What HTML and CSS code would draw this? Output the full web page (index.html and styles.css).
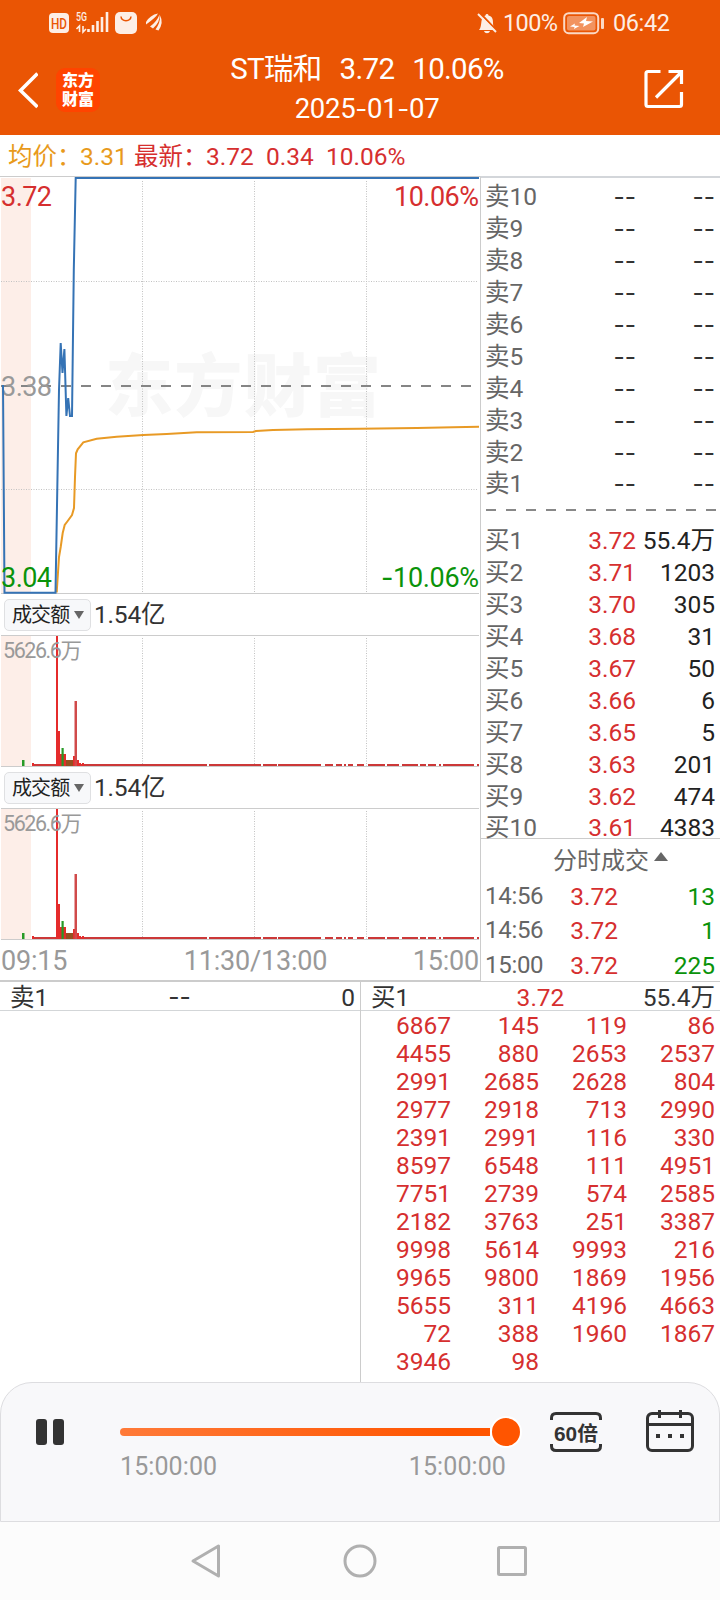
FILE: index.html
```html
<!DOCTYPE html>
<html lang="zh-CN">
<head>
  <meta charset="UTF-8">
  <meta name="viewport" content="width=device-width, initial-scale=1.0">
  <title>ST瑞和</title>
  <link rel="stylesheet" href="styles.css">
</head>
<body>
  <!-- 顶部 Start -->
  <div class="top">
    <div class="status">
      <svg class="status-left" width="120" height="46" viewBox="0 0 120 46">
        <rect x="1" y="13" width="20" height="20" rx="4" fill="#fdeee5"/>
        <text x="3" y="28.500" class="hd" textLength="16" lengthAdjust="spacingAndGlyphs">HD</text>
        <text x="28" y="21" class="net" textLength="11" lengthAdjust="spacingAndGlyphs">5G</text>
        <path d="M31.500 32v-6l-3 3M35 26v6l3-3" fill="none" stroke="#fdeee5" stroke-width="1.600"/>
        <path d="M40.500 29v3M45 25v7M49.500 21v11M54 17v15M59 12v20" stroke="#fdeee5" stroke-width="2.600"/>
        <rect x="67" y="12" width="22" height="22" rx="5" fill="#fdeee5"/>
        <path d="M73 16.500c.5 5.500 9.500 5.500 10 0" fill="none" stroke="#ea5504" stroke-width="1.500"/>
        <path d="M98 22q4-7 12-8.500q-2 4-12 11zM102 26.500q7-5 9.500-12q1 7-6.500 14zM107.500 29.500q5-7 4.500-14q4 7-1.500 15z" fill="#fdeee5"/>
      </svg>
      <svg class="bell" width="20" height="22" viewBox="0 0 20 22">
        <path d="M2 18c2-2 2-6 2.500-9c.7-4 2.500-5 4-5.500c0-2 3-2 3 0c4 1 4.500 4 4.500 7c0 4 1 5 2.500 7.500zM7 19h6c-1 3-5 3-6 0z" fill="#fdeee5"/>
        <path d="M3 1l17 18" stroke="#ea5504" stroke-width="2"/>
        <path d="M1 2l18 18" stroke="#fdeee5" stroke-width="2"/>
      </svg>
      <span class="percent">100%</span>
      <svg class="battery" width="42" height="24" viewBox="0 0 42 24">
        <rect x="1.200" y="2.200" width="34" height="20" rx="4.500" fill="none" stroke="#fbd9c5" stroke-width="2"/>
        <rect x="4" y="5" width="28.500" height="14.500" rx="2" fill="#f2935f"/>
        <path d="M16 12l8-6-1 4 7 .5-10 5.500 1-3.500zM7 15.500l5-3-.5 2 5 .5-5.500 3 .5-2z" fill="#fff"/>
        <rect x="38" y="7" width="3" height="11" rx="1" fill="#fbd9c5"/>
      </svg>
      <span class="clock">06:42</span>
    </div>
    <div class="header">
      <svg class="back" width="20" height="38" viewBox="0 0 20 38">
        <path d="M19.500 2.500L2.500 19.500l17 16.500" fill="none" stroke="#fff" stroke-width="3.600"/>
      </svg>
      <div class="logo"><span>东方</span><span>财富</span></div>
      <div class="title">
        <div class="name">ST瑞和<span class="num">3.72</span><span class="num">10.06%</span></div>
        <div class="date">2025<b>-</b>01<b>-</b>07</div>
      </div>
      <svg class="share" width="40" height="40" viewBox="0 0 40 40">
        <path d="M16.500 2.500H4q-2 0-2 2v31q0 2 2 2h31.500q2 0 2-2V23M24.500 2.500h13v12.500M12 28.500L36.500 4" fill="none" stroke="#fff" stroke-width="3.200"/>
      </svg>
    </div>
  </div>
  <!-- 顶部 End -->

  <div class="summary">
    <span class="avg">均价：</span><span class="avg avg-num">3.31</span>
    <span class="red new">最新：</span><span class="red v1">3.72</span><span class="red v2">0.34</span><span class="red v3">10.06%</span>
  </div>

  <div class="main">
    <div class="charts">
      <!-- 分时图 -->
      <svg class="price-chart" width="480" height="418" viewBox="0 0 480 418">
        <rect x="1" y="2" width="30" height="415" fill="#fdeee8"/>
        <text class="watermark" x="105" y="235" textLength="276">东方财富</text>
        <path class="line" d="M0 .5h480M1 417.500h478"/>
        <path class="dot" d="M1 105.500h476M1 313.500h476M142.500 5v412M254.500 5v412M366.500 5v412"/>
        <path d="M1 210h474" stroke="#858585" stroke-width="2" stroke-dasharray="10 10"/>
        <text class="label gray" x="1" y="220.300" textLength="51">3.38</text>
        <polyline class="avg-line" points="56.700,416.500 59,381 60.700,371 62.700,357 64.700,349 67.700,345 72,339 74,332 75,301 76,277.300 77.700,273.300 83.300,266.300 96.700,262.700 116.700,260.700 143.300,259 166.700,258 196.700,256.300 253,256 256,255 273,254 307,253.300 360,252.700 417,252 453,251.300 479,250.700"/>
        <polyline class="price-line" points="3,209 4.500,416.800 55.500,416.800 59,214 60.700,167 62.500,197 64.400,173 66.400,240 68.200,222 70,240 72,240 73.800,94 75.700,2 479,2"/>
        <text class="label red" x="1" y="30" textLength="51">3.72</text>
        <text class="label red" x="394" y="30" textLength="85">10.06%</text>
        <text class="label green" x="1" y="411" textLength="51">3.04</text>
        <text class="label green" x="381" y="411" textLength="98"><tspan class="minus">-</tspan>10.06%</text>
      </svg>

      <!-- 成交额 -->
      <div class="picker"><div class="select"><span>成交额</span><i></i></div><span class="amount">1.54亿</span></div>
      <svg width="480" height="132" viewBox="0 0 480 132">
        <g id="volume">
          <rect x="1" y="1" width="30" height="130" fill="#fdeee8"/>
          <path class="line" d="M1 .5h478M1 131.500h478"/>
          <path class="dot" d="M142.500 3v128M254.500 3v128M366.500 3v128"/>
          <path d="M32 129h175v2h-175zM209 129h52v2h-52zM263 129h14v2h-14zM278 129h43v2h-43zM325 129h8v2h-8zM336 129h6v2h-6zM344 129h2v2h-2zM348 129h5v2h-5zM357 129h7v2h-7zM368 129h17v2h-17zM387 129h12v2h-12zM402 129h16v2h-16zM420 129h6v2h-6zM428 129h8v2h-8zM439 129h2v2h-2zM443 129h31v2h-31zM477 129h2v2h-2z" fill="#cc3838"/>
          <path d="M32 128h2v3h-2zM56 1h2v130h-2zM58 96h2v35h-2zM60 119h2v12h-2zM63 119h3v12h-3zM73 121h2v10h-2zM77 125h2v6h-2zM79 128h2v3h-2zM82 128h2v3h-2z" fill="#e52b2b"/>
          <path d="M74.500 66h2.500v65h-2.500z" fill="#d04a4a"/>
          <path d="M66 125h7v6h-7z" fill="#945020"/>
          <path d="M22 125h2.500v6H22zM61.500 113h2.200v18h-2.200z" fill="#279a27"/>
          <text class="vol-label" x="3" y="22.700" textLength="79">5626.6万</text>
        </g>
      </svg>
      <div class="picker"><div class="select"><span>成交额</span><i></i></div><span class="amount">1.54亿</span></div>
      <svg width="480" height="132" viewBox="0 0 480 132"><use href="#volume"/></svg>
      <div class="axis"><span>09:15</span><span>11:30/13:00</span><span>15:00</span></div>
    </div>

    <!-- 盘口 -->
    <div class="side">
      <div class="sell" id="sell"></div>
      <div class="divider"></div>
      <div class="buy" id="buy"></div>
      <div class="deal-title">分时成交<i></i></div>
      <div class="deals">
        <div class="deal"><span>14:56</span><span class="red">3.72</span><span class="green">13</span></div>
        <div class="deal"><span>14:56</span><span class="red">3.72</span><span class="green">1</span></div>
        <div class="deal"><span>15:00</span><span class="red">3.72</span><span class="green">225</span></div>
      </div>
    </div>
  </div>

  <!-- 委托队列 -->
  <div class="queue">
    <div class="queue-col">
      <div class="queue-head"><span>卖1</span><span class="dash">--</span><span>0</span></div>
    </div>
    <div class="queue-col queue-buy">
      <div class="queue-head"><span>买1</span><span class="red">3.72</span><span>55.4万</span></div>
      <div class="orders" id="orders"></div>
    </div>
  </div>

  <!-- 回放控制 -->
  <div class="player">
    <div class="pause"><i></i><i></i></div>
    <div class="progress">
      <div class="track"><div class="thumb"></div></div>
      <div class="times"><span>15:00:00</span><span>15:00:00</span></div>
    </div>
    <svg class="speed" width="52" height="40" viewBox="0 0 52 40">
      <path d="M1.500 8V6q0-4.500 4.500-4.500h40q4.500 0 4.500 4.500v2M1.500 32v2q0 4.500 4.500 4.500h40q4.500 0 4.500-4.500v-2" fill="none" stroke="#333" stroke-width="3"/>
      <text x="4" y="28.500" textLength="44" lengthAdjust="spacingAndGlyphs">60倍</text>
    </svg>
    <svg class="calendar" width="48" height="42" viewBox="0 0 48 42">
      <rect x="1.500" y="3.500" width="45" height="37" rx="4.500" fill="none" stroke="#333" stroke-width="3"/>
      <path d="M2 14.500h44M13.500 0v8M34.500 0v8" stroke="#333" stroke-width="3"/>
      <path d="M10 24h4v4h-4zM22 24h4v4h-4zM34 24h4v4h-4z" fill="#333"/>
    </svg>
  </div>

  <!-- 系统导航 -->
  <div class="nav">
    <svg width="36" height="36" viewBox="0 0 36 36"><path d="M3 18L28.500 3v30z"/></svg>
    <svg width="36" height="36" viewBox="0 0 36 36"><circle cx="18" cy="18" r="15"/></svg>
    <svg width="36" height="36" viewBox="0 0 36 36"><rect x="4.500" y="4.500" width="27" height="27" rx="1"/></svg>
  </div>

  <script>
  const buyList = [['3.72', '55.4万'], ['3.71', 1203], ['3.70', 305], ['3.68', 31], ['3.67', 50], ['3.66', 6], ['3.65', 5], ['3.63', 201], ['3.62', 474], ['3.61', 4383]]
  const orderList = [
    6867, 145, 119, 86, 4455, 880, 2653, 2537, 2991, 2685, 2628, 804, 2977, 2918, 713, 2990,
    2391, 2991, 116, 330, 8597, 6548, 111, 4951, 7751, 2739, 574, 2585, 2182, 3763, 251, 3387,
    9998, 5614, 9993, 216, 9965, 9800, 1869, 1956, 5655, 311, 4196, 4663, 72, 388, 1960, 1867,
    3946, 98
  ]

  // 卖盘
  let sellHtml = ''
  for (let i = 10; i > 0; i--) {
    sellHtml += `<div class="row"><span>卖${i}</span><span class="dash">--</span><span class="dash">--</span></div>`
  }
  document.querySelector('#sell').innerHTML = sellHtml

  // 买盘
  document.querySelector('#buy').innerHTML = buyList.map((item, i) =>
    `<div class="row"><span>买${i + 1}</span><span class="red">${item[0]}</span><span class="vol">${item[1]}</span></div>`
  ).join('')

  // 队列
  document.querySelector('#orders').innerHTML = orderList.map(n => `<span>${n}</span>`).join('')
  </script>
</body>
</html>
```
FILE: styles.css
```css
* {
    box-sizing: border-box;
}

body {
    margin: 0;
    width: 720px;
    height: 1600px;
    overflow: hidden;
    background: #fff;
    color: #333;
    font-family: Roboto, "Noto Sans CJK SC", sans-serif;
    font-size: 24.5px;
    white-space: nowrap;
}

svg {
    display: block;
    flex: none;
}

.red {
    color: #d62f2f;
    fill: #d62f2f;
}

.green {
    color: #0a930a;
    fill: #0a930a;
}

.gray {
    fill: #999;
}

/* 顶部 */
.top {
    height: 135px;
    background: #ea5504;
    color: #fff;
}

.status {
    display: flex;
    align-items: center;
    height: 46px;
    padding-left: 48px;
    color: #fdeee5;
    font-size: 23.5px;
    line-height: 48px;
}

.hd {
    font: 500 14px Roboto;
    fill: #ea5504;
}

.net {
    font: 500 12px Roboto;
    fill: #fdeee5;
}

.bell {
    margin-left: 309px;
}

.percent {
    width: 56px;
    margin-left: 6px;
    letter-spacing: -0.6px;
}

.battery {
    margin-left: 4px;
}

.clock {
    margin-left: 8px;
    letter-spacing: -0.4px;
}

.header {
    display: flex;
    height: 89px;
}

.back {
    margin: 25px 0 0 18px;
}

.logo {
    display: flex;
    flex-direction: column;
    align-items: center;
    width: 44px;
    height: 44px;
    margin: 22px 0 0 18px;
    padding-top: 3px;
    border-radius: 9px;
    background: #ff4400;
    font-size: 16px;
    font-weight: 900;
    line-height: 19px;
}

.title {
    width: 534px;
    padding-top: 2px;
    text-align: center;
}

.name {
    height: 43px;
    font-size: 29.5px;
    line-height: 43px;
    letter-spacing: -0.7px;
}

.name .num {
    margin-left: 18px;
}

.date {
    font-size: 27.5px;
    line-height: 36px;
    letter-spacing: -0.3px;
}

.date b {
    font-family: Inter;
    font-size: 26px;
    font-weight: 400;
}

.share {
    margin: 23px 0 0 10px;
}

/* 均价 */
.summary {
    display: flex;
    height: 41px;
    padding-left: 8px;
    line-height: 43px;
}

.summary .avg {
    width: 72px;
    color: #e89a1c;
}

.summary .avg-num {
    width: 54px;
}

.summary .new {
    width: 72px;
}

.summary .v1,
.summary .v2 {
    width: 60px;
}

/* 图表 */
.main {
    display: flex;
    height: 805px;
}

.charts {
    width: 480px;
}

.line {
    fill: none;
    stroke: #ccc;
}

.dot {
    fill: none;
    stroke: #c2c2c2;
    stroke-dasharray: 1 1.5;
}

.watermark {
    font: 900 68px "Noto Sans CJK SC", sans-serif;
    fill: #f7f7f7;
}

.label {
    font-size: 27px;
}

.minus {
    font-family: Inter;
}

.vol-label {
    font-size: 21.5px;
    fill: #999;
}

.price-line {
    fill: none;
    stroke: #3573b5;
    stroke-width: 2;
}

.avg-line {
    fill: none;
    stroke: #e89a25;
    stroke-width: 2;
}

.picker {
    display: flex;
    align-items: center;
    height: 41px;
    padding-left: 4px;
    line-height: 40px;
}

.select {
    display: flex;
    align-items: center;
    width: 87px;
    height: 32px;
    padding-left: 7px;
    border: 1px solid #dfe0e2;
    border-radius: 5px;
    background: #f7f8fa;
    font-size: 20px;
    letter-spacing: -0.9px;
    color: #222;
}

.select i {
    margin-left: 5px;
    border: 5px solid transparent;
    border-top: 8px solid #666;
    border-bottom: 0;
}

.amount {
    margin-left: 3px;
    letter-spacing: -0.2px;
}

.axis {
    display: grid;
    grid-template-columns: 120px 1fr 90px;
    height: 41px;
    padding: 0 0 0 1px;
    border-bottom: 1px solid #ccc;
    color: #999;
    font-size: 27px;
    line-height: 42px;
    letter-spacing: -0.2px;
}

.axis span:nth-child(2) {
    text-align: center;
}

.axis span:nth-child(3) {
    padding-right: 1px;
    text-align: right;
}

/* 盘口 */
.side {
    width: 240px;
    border-top: 2px solid #d3d6da;
    border-left: 1px solid #ccc;
    color: #666;
}

.sell {
    padding-top: 3px;
}

.row {
    display: flex;
    height: 32px;
    padding: 0 5px 0 4px;
    line-height: 32px;
}

.row span:nth-child(1) {
    width: 70px;
}

.row span:nth-child(2) {
    width: 81px;
    text-align: right;
}

.row span:nth-child(3) {
    width: 79px;
    text-align: right;
}

.row:last-child span:nth-child(n) {
    line-height: 30px;
}

.dash {
    font-family: Inter;
    color: #333;
}

.row .vol {
    color: #222;
}

.divider {
    height: 2px;
    margin: 8px 4px 14px 5px;
    background: repeating-linear-gradient(to right, #888 0 10px, transparent 10px 20px);
}

.buy {
    height: 314px;
    border-bottom: 1px solid #ccc;
}

.deal-title {
    display: flex;
    align-items: center;
    height: 38px;
    padding-left: 72px;
    font-size: 24px;
}

.deal-title i {
    margin-left: 5px;
    margin-bottom: 3px;
    border: 7px solid transparent;
    border-bottom: 9px solid #666;
    border-top: 0;
}

.deal {
    display: flex;
    height: 34.3px;
    padding-left: 4px;
    line-height: 39px;
}

.deal span:nth-child(1) {
    width: 62px;
    font-size: 24px;
    letter-spacing: -0.3px;
}

.deal span:nth-child(2) {
    width: 71px;
    text-align: right;
}

.deal span:nth-child(3) {
    width: 97px;
    text-align: right;
}

/* 委托队列 */
.queue {
    display: flex;
    height: 401px;
    border-top: 1px solid #ccc;
}

.queue-col {
    width: 360px;
}

.queue-buy {
    border-left: 1px solid #ccc;
}

.queue-head {
    display: flex;
    height: 29px;
    padding: 0 5px 0 10px;
    border-bottom: 1px solid #d3d6d8;
    line-height: 31px;
}

.queue-head span:nth-child(1) {
    width: 110px;
}

.queue-head span:nth-child(2) {
    width: 119px;
    text-align: center;
}

.queue-head span:nth-child(3) {
    flex: 1;
    text-align: right;
}

.orders {
    display: grid;
    grid-template-columns: 90px 88px 88px 88px;
    grid-auto-rows: 28px;
    color: #d62f2f;
    line-height: 29px;
    text-align: right;
}

/* 回放控制 */
.player {
    display: flex;
    height: 140px;
    padding-left: 35px;
    border: 1px solid #dddde0;
    border-radius: 32px 32px 0 0;
    background: #f8f8fa;
}

.pause {
    display: flex;
    gap: 6px;
    margin-top: 36px;
}

.pause i {
    width: 11px;
    height: 26px;
    border-radius: 3px;
    background: #333;
}

.progress {
    width: 386px;
    margin: 45px 0 0 56px;
}

.track {
    position: relative;
    width: 370px;
    height: 8px;
    border-radius: 4px 0 0 4px;
    background: linear-gradient(to right, #ff7a38, #ff5500 90%);
}

.thumb {
    position: absolute;
    top: -12px;
    left: 370px;
    width: 32px;
    height: 32px;
    border: 2px solid #fff;
    border-radius: 50%;
    background: #ff5500;
}

.times {
    display: flex;
    justify-content: space-between;
    margin-top: 14px;
    font-size: 25px;
    line-height: 33px;
    letter-spacing: 0.1px;
    color: #999;
}

.speed {
    margin: 29px 0 0 44px;
    font-size: 20px;
    font-weight: 700;
    font-family: "Liberation Sans", "Noto Sans CJK SC", sans-serif;
    fill: #333;
}

.calendar {
    margin: 27px 0 0 44px;
}

/* 系统导航 */
.nav {
    display: flex;
    justify-content: center;
    gap: 116px;
    height: 78px;
    padding-top: 21px;
    background: #fcfcfc;
}

.nav svg {
    fill: none;
    stroke: #b0b0b0;
    stroke-width: 3;
    stroke-linejoin: round;
}
```
